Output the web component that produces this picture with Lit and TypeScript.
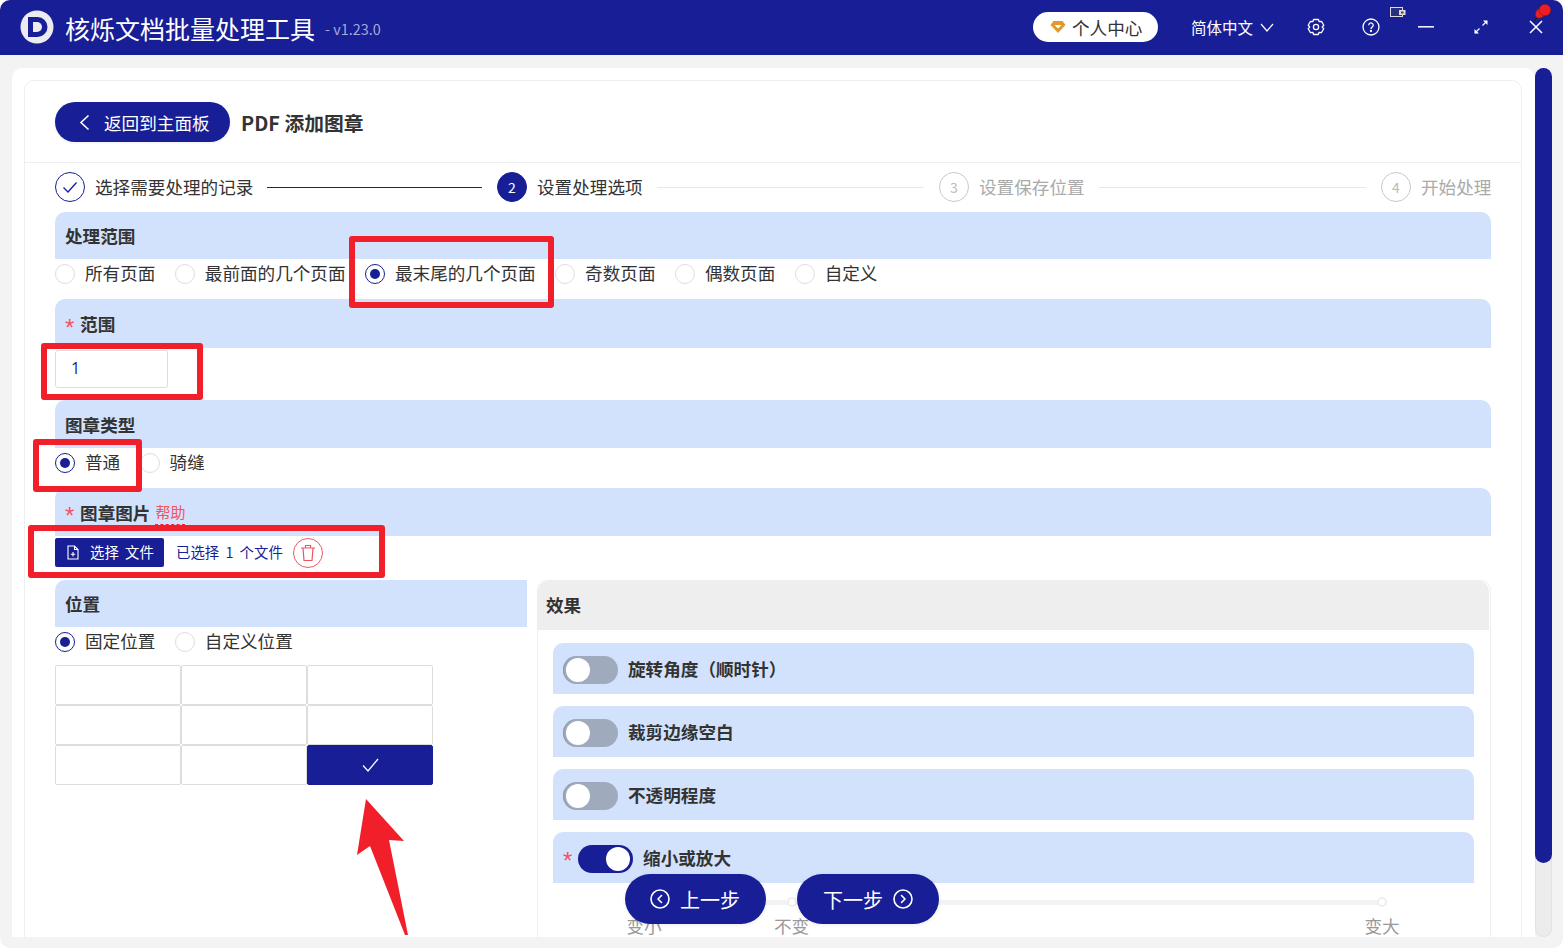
import { css, html, LitElement, svg } from "lit";
import { customElement } from "lit/decorators.js";

const rangeOptions = ["所有页面", "最前面的几个页面", "最末尾的几个页面", "奇数页面", "偶数页面", "自定义"];
const steps = ["选择需要处理的记录", "设置处理选项", "设置保存位置", "开始处理"];
const effects = [
  { label: "旋转角度（顺时针）", on: false },
  { label: "裁剪边缘空白", on: false },
  { label: "不透明程度", on: false },
  { label: "缩小或放大", on: true, required: true },
];
const marks = [
  { label: "变小", at: 0 },
  { label: "不变", at: 20 },
  { label: "变大", at: 100 },
];
// red annotation frames drawn on top of the screenshot
const frames = [
  { x: 349, y: 236, w: 205, h: 72 },
  { x: 41, y: 343, w: 162, h: 57 },
  { x: 33, y: 439, w: 109, h: 53 },
  { x: 28, y: 525, w: 357, h: 53 },
];

@customElement("app-root")
export class AppRoot extends LitElement {
  static styles = css`
    :host {
      --blue: #171e96;
      display: block;
      position: relative;
      width: 1563px;
      height: 948px;
      overflow: hidden;
      background: #fff;
      font-family: "Noto Sans CJK SC", "Noto Sans", sans-serif;
      font-size: 17.6px;
      color: #333;
    }
    * {
      box-sizing: border-box;
    }
    .window {
      height: 948px;
      display: flex;
      flex-direction: column;
      background: #f3f3f3;
      border-radius: 10px;
      overflow: hidden;
    }
    .topbar {
      height: 55px;
      flex: none;
      display: flex;
      align-items: center;
      background: var(--blue);
      color: #fff;
      padding-left: 20px;
    }
    .logo {
      width: 34px;
      height: 34px;
      margin-top: -1px;
    }
    .app-name {
      margin-left: 11px;
      font-size: 25px;
      line-height: 30px;
      white-space: nowrap;
    }
    .version {
      margin-left: 10px;
      margin-top: 1px;
      font-size: 14.4px;
      color: #a4abd6;
      white-space: nowrap;
    }
    .vip {
      margin-left: auto;
      width: 125px;
      height: 30px;
      margin-top: -1px;
      border-radius: 15px;
      background: #fff;
      color: #333;
      display: flex;
      align-items: center;
      padding: 0 0 0 17px;
      gap: 6px;
      white-space: nowrap;
    }
    .lang {
      margin-left: 33px;
      margin-top: -2px;
      font-size: 15.5px;
      white-space: nowrap;
    }
    .lang-arrow {
      margin-left: 7px;
    }
    .tool {
      width: 55px;
      display: flex;
      justify-content: center;
      margin-top: -1px;
    }
    .tool.first {
      margin-left: 14px;
    }
    .body {
      flex: 1;
      min-height: 0;
      display: flex;
      padding: 13px 11px 11px 12px;
    }
    .panel {
      width: 1523px;
      height: 869px;
      background: #fff;
      border-radius: 10px 10px 0 0;
      padding: 12px 13px 0 12px;
      overflow: hidden;
    }
    .scroll {
      width: 17px;
      height: 869px;
      border: 1px solid #e2e2e2;
      border-top: 0;
      border-radius: 9px;
      background: #ececec;
    }
    .thumb {
      height: 795px;
      margin: 0 -1px;
      background: var(--blue);
      border-radius: 9px;
    }
    .card {
      height: 900px;
      border: 1px solid #eee;
      border-radius: 10px 10px 0 0;
      padding: 0 30px;
    }
    .card-head {
      height: 82px;
      margin: 0 -30px;
      padding: 21px 30px 0;
      border-bottom: 1px solid #eee;
      display: flex;
      align-items: flex-start;
    }
    .back {
      width: 175px;
      height: 40px;
      border-radius: 20px;
      background: var(--blue);
      color: #fff;
      display: flex;
      align-items: center;
      padding-left: 24px;
      gap: 14px;
      box-shadow: 0 1px 3px rgba(0, 0, 0, 0.08);
      white-space: nowrap;
    }
    .page-title {
      margin-left: 11px;
      font-size: 19.8px;
      font-weight: 700;
      line-height: 42px;
      white-space: nowrap;
    }
    .steps {
      display: flex;
      padding-top: 9px;
      height: 49px;
    }
    .step {
      flex: 0 0 442px;
      display: flex;
      align-items: center;
      height: 30px;
      white-space: nowrap;
    }
    .step:last-child {
      flex: 1;
    }
    .dot {
      width: 30px;
      height: 30px;
      flex: none;
      border-radius: 50%;
      border: 1px solid #c9c9c9;
      color: #bbb;
      font-size: 14px;
      display: flex;
      align-items: center;
      justify-content: center;
      margin-right: 10px;
    }
    .step.done .dot {
      border-color: var(--blue);
    }
    .step.now .dot {
      background: var(--blue);
      border-color: var(--blue);
      color: #fff;
    }
    .name {
      padding-bottom: 2px;
    }
    .step.todo .name {
      color: #aaa;
    }
    .line {
      flex: 1;
      height: 1px;
      margin: 0 15px 0 14px;
      background: #e8e8e8;
    }
    .step.done .line {
      background: var(--blue);
    }
    .head {
      height: 48px;
      background: #d2e2fc;
      border-radius: 10px 10px 0 0;
      padding-left: 10px;
      display: flex;
      align-items: center;
      font-weight: 700;
      white-space: nowrap;
    }
    .head.short {
      height: 47px;
    }
    .head.tall {
      height: 49px;
    }
    .star {
      font-family: "Liberation Sans", sans-serif;
      font-size: 24px;
      line-height: 24px;
      padding-top: 8px;
      color: #f5515f;
      font-weight: 400;
      margin-right: 5.7px;
    }
    .help {
      margin-left: 5px;
      margin-top: 5px;
      padding-bottom: 4px;
      font-size: 15px;
      font-weight: 400;
      color: #f5515f;
      border-bottom: 1px dashed #f01f2a;
      line-height: 16px;
    }
    .radios {
      height: 40px;
      padding-bottom: 10px;
      display: flex;
      align-items: center;
      gap: 19.4px;
    }
    .radios.flat {
      height: 30px;
      padding-bottom: 0;
    }
    .radio {
      display: flex;
      align-items: center;
      gap: 10px;
      white-space: nowrap;
    }
    .radio span:last-child {
      padding-bottom: 4px;
    }
    .ring {
      width: 20px;
      height: 20px;
      border-radius: 50%;
      border: 1px solid #ddd;
      display: flex;
      align-items: center;
      justify-content: center;
    }
    .ring.on {
      border: 1.5px solid var(--blue);
    }
    .ring.on::after {
      content: "";
      width: 10px;
      height: 10px;
      border-radius: 50%;
      background: var(--blue);
    }
    .input {
      width: 113px;
      height: 38px;
      margin: 2px 0 12px;
      border: 1px solid #ddd;
      border-radius: 3px;
      padding: 0 0 2px 15px;
      display: flex;
      align-items: center;
      font-family: "Open Sans", sans-serif;
      font-size: 16px;
      color: var(--blue);
    }
    .file-row {
      height: 44px;
      padding-top: 2px;
      display: flex;
      align-items: flex-start;
      font-size: 14.4px;
      word-spacing: 3px;
      white-space: nowrap;
    }
    .pick {
      width: 109px;
      height: 29px;
      background: var(--blue);
      border-radius: 2px;
      color: #fff;
      display: flex;
      align-items: center;
      padding: 0 0 3px 11px;
      gap: 10px;
    }
    .pick svg {
      margin-top: 3px;
    }
    .picked {
      margin-left: 12px;
      line-height: 27px;
      color: var(--blue);
    }
    .trash {
      width: 30px;
      height: 30px;
      margin-left: 10px;
      border: 1px solid #f0555f;
      border-radius: 50%;
      display: flex;
      align-items: center;
      justify-content: center;
    }
    .columns {
      display: flex;
      gap: 10px;
    }
    .left {
      flex: 0 0 472px;
    }
    .left .head {
      border-radius: 10px 0 0 0;
    }
    .grid {
      width: 378px;
      margin-top: 8px;
      display: grid;
      grid-template-columns: repeat(3, 126px);
      grid-auto-rows: 40px;
    }
    .cell {
      border: 1px solid #ddd;
      border-radius: 2px;
      display: flex;
      align-items: center;
      justify-content: center;
    }
    .cell.on {
      background: var(--blue);
      border-color: var(--blue);
    }
    .right {
      flex: 1;
      min-height: 400px;
      border: 1px solid #eee;
      border-radius: 10px 10px 0 0;
    }
    .right-head {
      height: 49px;
      background: #eee;
      border-radius: 10px 10px 0 0;
      margin-right: 1px;
      padding: 0 0 2px 8px;
      display: flex;
      align-items: center;
      font-weight: 700;
    }
    .effects {
      margin: 13px 16px 0 15px;
      display: flex;
      flex-direction: column;
      gap: 12.5px;
    }
    .effect {
      height: 50.5px;
      background: #d2e2fc;
      border-radius: 10px 10px 0 0;
      padding-left: 10px;
      display: flex;
      align-items: center;
      font-weight: 700;
      white-space: nowrap;
    }
    .switch {
      width: 55px;
      height: 28px;
      margin: 3px 10px 0 0;
      border-radius: 14px;
      background: #9fabbd;
      padding: 2px 3px;
      display: flex;
      box-shadow: inset 1px 0 0 #8c97a8;
    }
    .switch.on {
      background: var(--blue);
      justify-content: flex-end;
      box-shadow: none;
    }
    .switch i {
      width: 24px;
      height: 24px;
      border-radius: 50%;
      background: #fff;
    }
    .slider {
      position: relative;
      height: 5px;
      margin: 17px 108px 0 106px;
      background: #f3f3f3;
      border-radius: 3px;
    }
    .mark {
      position: absolute;
      top: -3px;
      width: 10px;
      height: 10px;
      margin-left: -5px;
      border: 2px solid #eee;
      border-radius: 50%;
      background: #fff;
    }
    .mark span {
      position: absolute;
      top: 14px;
      left: 50%;
      transform: translateX(-50%);
      color: #999;
      white-space: nowrap;
    }
    .float {
      position: absolute;
      top: 874px;
      height: 50px;
      border-radius: 25px;
      background: var(--blue);
      color: #fff;
      font-size: 20px;
      display: flex;
      align-items: center;
      gap: 10px;
      white-space: nowrap;
      box-shadow: 0 1px 4px rgba(0, 0, 0, 0.08);
    }
    .float.prev {
      left: 625px;
      width: 141px;
      padding-left: 25px;
    }
    .float.next {
      left: 797px;
      width: 142px;
      padding-left: 26px;
    }
    .frame {
      position: absolute;
      border: 6.5px solid #f01f2a;
      border-radius: 3px;
    }
    .over {
      position: absolute;
      left: 0;
      top: 0;
      pointer-events: none;
    }
    .pin {
      position: absolute;
      left: 1531px;
      top: 2px;
    }
    .mini {
      position: absolute;
      left: 1390px;
      top: 7px;
    }
  `;

  radio(label: string, on = false) {
    return html`<div class="radio"><span class="ring ${on ? "on" : ""}"></span><span>${label}</span></div>`;
  }

  chevronCircle(points: string) {
    return html`<svg width="20" height="20" viewBox="0 0 20 20" fill="none" stroke="#fff" stroke-width="1.6">
      <circle cx="10" cy="10" r="9"></circle>
      <polyline points=${points} stroke-linecap="round" stroke-linejoin="round"></polyline>
    </svg>`;
  }

  renderTopbar() {
    return html`<div class="topbar">
      <svg class="logo" viewBox="0 0 34 34">
        <circle cx="17" cy="17" r="16.5" fill="#ecebef"></circle>
        <path d="M8 7h9.500a10 10 0 0 1 0 20H8z" fill="#171e96"></path>
        <path d="M13 12h4a5 5 0 0 1 0 10h-4z" fill="#ecebef"></path>
      </svg>
      <div class="app-name">核烁文档批量处理工具</div>
      <div class="version">- v1.23.0</div>
      <div class="vip">
        <svg width="16" height="14" viewBox="0 0 16 14">
          <path d="M3.500 1h9L15.500 5 8 13 .5 5z" fill="#e09a2b"></path>
          <path d="M4.500 5h7L8 8.600z" fill="#fff"></path>
        </svg>
        个人中心
      </div>
      <div class="lang">简体中文</div>
      <svg class="lang-arrow" width="14" height="9" viewBox="0 0 14 9" fill="none" stroke="#fff" stroke-width="1.2">
        <polyline points="1,1 7,8 13,1"></polyline>
      </svg>
      <div class="tool first">
        <svg width="18" height="18" viewBox="0 0 18 18" fill="none" stroke="#fff" stroke-width="1.3" stroke-linejoin="round">
          <path d="M6.600 1.500h4.800l.8 2.200 2.300-.4 2.300 4-.1.2-1.500 1.500 1.500 1.700-2.300 4-2.300-.4-.8 2.200H6.600l-.8-2.200-2.300.4-2.300-4L2.700 9 1.200 7.300l2.300-4 2.300.4z"></path>
          <circle cx="9" cy="9" r="2.600"></circle>
        </svg>
      </div>
      <div class="tool">
        <svg width="18" height="18" viewBox="0 0 18 18" fill="none" stroke="#fff" stroke-width="1.3">
          <circle cx="9" cy="9" r="8"></circle>
          <path d="M6.800 7.200a2.200 2.200 0 1 1 3.400 1.800c-.8.500-1.200 1-1.200 2"></path>
          <circle cx="9" cy="13" r=".5" fill="#fff"></circle>
        </svg>
      </div>
      <div class="tool">
        <svg width="16" height="2" viewBox="0 0 16 2"><rect width="16" height="1.6" fill="#eef"></rect></svg>
      </div>
      <div class="tool">
        <svg width="14" height="14" viewBox="0 0 14 14" fill="#fff" stroke="#fff">
          <path d="M1 13 5.500 8.500M13 1 8.500 5.500" stroke-width="1.200"></path>
          <path d="M.5 13.500V9l4.500 4.500zM13.500.5V5L9 .5z" stroke="none"></path>
        </svg>
      </div>
      <div class="tool">
        <svg width="14" height="14" viewBox="0 0 14 14" stroke="#fff" stroke-width="1.500">
          <path d="M1 1 13 13M13 1 1 13"></path>
        </svg>
      </div>
    </div>`;
  }

  renderSteps() {
    return html`<div class="steps">
      ${steps.map((name, i) => {
        const state = i === 0 ? "done" : i === 1 ? "now" : "todo";
        return html`<div class="step ${state}">
          <span class="dot">
            ${i === 0
              ? html`<svg width="16" height="13" viewBox="0 0 16 13" fill="none" stroke="#171e96" stroke-width="1.300">
                  <polyline points="1.500,6.500 6,11 14.500,1.500"></polyline>
                </svg>`
              : i + 1}
          </span>
          <span class="name">${name}</span>
          ${i < steps.length - 1 ? html`<span class="line"></span>` : ""}
        </div>`;
      })}
    </div>`;
  }

  renderRight() {
    return html`<div class="right">
      <div class="right-head">效果</div>
      <div class="effects">
        ${effects.map(
          (e) => html`<div class="effect">
            ${e.required ? html`<span class="star">*</span>` : ""}
            <span class="switch ${e.on ? "on" : ""}"><i></i></span>
            ${e.label}
          </div>`
        )}
      </div>
      <div class="slider">
        ${marks.map(
          (m) => html`<div class="mark" style="left:${m.at}%"><span>${m.label}</span></div>`
        )}
      </div>
    </div>`;
  }

  renderForm() {
    return html`
      <div class="head short">处理范围</div>
      <div class="radios">${rangeOptions.map((o, i) => this.radio(o, i === 2))}</div>

      <div class="head tall"><span class="star">*</span>范围</div>
      <div class="input">1</div>

      <div class="head">图章类型</div>
      <div class="radios">${this.radio("普通", true)}${this.radio("骑缝")}</div>

      <div class="head">
        <span class="star">*</span>图章图片<span class="help">帮助</span>
      </div>
      <div class="file-row">
        <div class="pick">
          <svg width="14" height="15" viewBox="0 0 14 15" fill="none" stroke="#fff" stroke-width="1.100">
            <path d="M2 1h6.500L12 4.500V14H2z"></path>
            <path d="M8.500 1v3.500H12M7 7v4.500M4.800 9.200h4.400"></path>
          </svg>
          选择 文件
        </div>
        <span class="picked">已选择 1 个文件</span>
        <span class="trash">
          <svg width="16" height="18" viewBox="0 0 16 18" fill="none" stroke="#f0555f" stroke-width="1.200">
            <path d="M1 4h14M5.500 4V1.500h5V4M3 4l1 12.500h8L13 4"></path>
          </svg>
        </span>
      </div>

      <div class="columns">
        <div class="left">
          <div class="head short">位置</div>
          <div class="radios flat">${this.radio("固定位置", true)}${this.radio("自定义位置")}</div>
          <div class="grid">
            ${Array.from({ length: 9 }, (_, i) =>
              i === 8
                ? html`<div class="cell on">
                    <svg width="17" height="14" viewBox="0 0 17 14" fill="none" stroke="#fff" stroke-width="1.300">
                      <polyline points="1,7.500 6,13 16,1"></polyline>
                    </svg>
                  </div>`
                : html`<div class="cell"></div>`
            )}
          </div>
        </div>
        ${this.renderRight()}
      </div>
    `;
  }

  render() {
    return html`<div class="window">
        ${this.renderTopbar()}
        <div class="body">
          <div class="panel">
            <div class="card">
              <div class="card-head">
                <div class="back">
                  <svg width="11" height="17" viewBox="0 0 11 17" fill="none" stroke="#fff" stroke-width="1.600">
                    <polyline points="9.500,1.500 2,8.500 9.500,15.500"></polyline>
                  </svg>
                  返回到主面板
                </div>
                <div class="page-title">PDF 添加图章</div>
              </div>
              ${this.renderSteps()} ${this.renderForm()}
            </div>
          </div>
          <div class="scroll"><div class="thumb"></div></div>
        </div>
      </div>

      <div class="float prev">${this.chevronCircle("11.500,6.500 8,10 11.500,13.500")}上一步</div>
      <div class="float next">下一步${this.chevronCircle("8.500,6.500 12,10 8.500,13.500")}</div>

      ${frames.map(
        (f) => html`<div class="frame" style="left:${f.x}px;top:${f.y}px;width:${f.w}px;height:${f.h}px"></div>`
      )}

      <svg class="over" width="1563" height="948">
        ${svg`<polygon points="366,799 404,841 389,840 408,935 405,935 370,846 357,855" fill="#f01f2a"></polygon>`}
      </svg>

      <svg class="mini" width="16" height="11" viewBox="0 0 16 11">
        <rect x=".5" y=".5" width="12" height="9" fill="#2b2f80" stroke="#ddd"></rect>
        <rect x="9" y="3" width="6.500" height="5" fill="#ddd"></rect>
        <rect x="11" y="4.500" width="2.500" height="2" fill="#444"></rect>
      </svg>
      <svg class="pin" width="24" height="22" viewBox="0 0 24 22">
        <path d="M2 20 8 14" stroke="#222" stroke-width="1.500"></path>
        <ellipse cx="9.500" cy="11" rx="6" ry="4.500" transform="rotate(-45 9.500 11)" fill="#e8202a" stroke="#5a1a20" stroke-width=".7"></ellipse>
        <circle cx="14" cy="8" r="5.800" fill="#ee1c25" stroke="#7a1a22" stroke-width=".6"></circle>
      </svg>`;
  }
}
